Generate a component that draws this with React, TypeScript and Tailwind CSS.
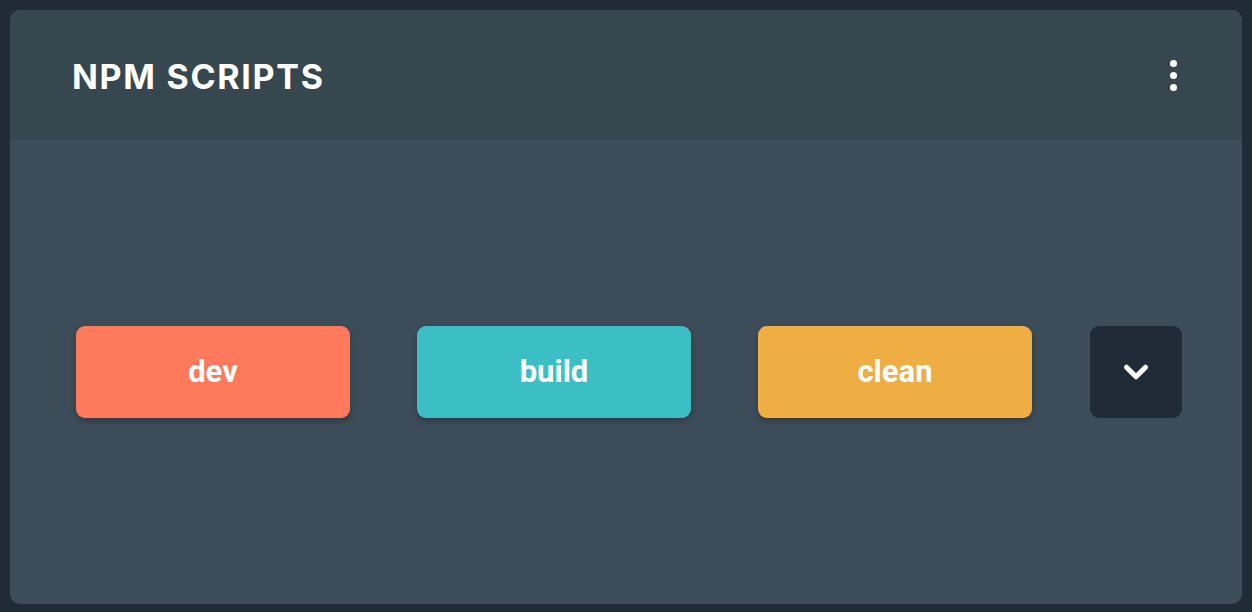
import { ChevronDown } from 'lucide-react';

type Script = {
  name: string;
  color: string;
};

const scripts: Script[] = [
  { name: 'dev', color: 'bg-[#ff7a5c]' },
  { name: 'build', color: 'bg-[#3bbfc4]' },
  { name: 'clean', color: 'bg-[#efae44]' },
];

/**
 * Card with a row of npm script buttons.
 */
export default function App() {
  return (
    <div className="w-[1252px] h-[612px] bg-[#212b37] p-[10px] pb-[8px]">
      <div className="h-full rounded-[10px] overflow-hidden bg-[#3d4c59] flex flex-col">
        {/* Header */}
        <div className="h-[130px] shrink-0 bg-[#37474f] flex items-center justify-between pl-[62px] pr-[61px]">
          <h2 className="font-['Inter',sans-serif] text-[34px] font-bold text-white tracking-[1.7px] pt-[3px]">NPM SCRIPTS</h2>
          <button className="flex flex-col items-center gap-[5px] p-1">
            <span className="w-[7px] h-[7px] rounded-full bg-white" />
            <span className="w-[7px] h-[7px] rounded-full bg-white" />
            <span className="w-[7px] h-[7px] rounded-full bg-white" />
          </button>
        </div>

        {/* Scripts */}
        <div className="flex-1 flex items-center pl-[66px] font-['Roboto',sans-serif]">
          <div className="flex items-center gap-[67px]">
            {scripts.map((s) => (
              <button
                key={s.name}
                className={`${s.color} w-[274px] h-[92px] rounded-[9px] shadow-[0_3px_6px_rgba(0,0,0,0.25)] text-white text-[31px] font-bold`}
              >
                {s.name}
              </button>
            ))}
          </div>
          <button className="ml-[58px] w-[92px] h-[92px] rounded-[9px] bg-[#212b37] flex items-center justify-center">
            <ChevronDown className="w-[38px] h-[38px] text-white" strokeWidth={3.2} />
          </button>
        </div>
      </div>
    </div>
  );
}
